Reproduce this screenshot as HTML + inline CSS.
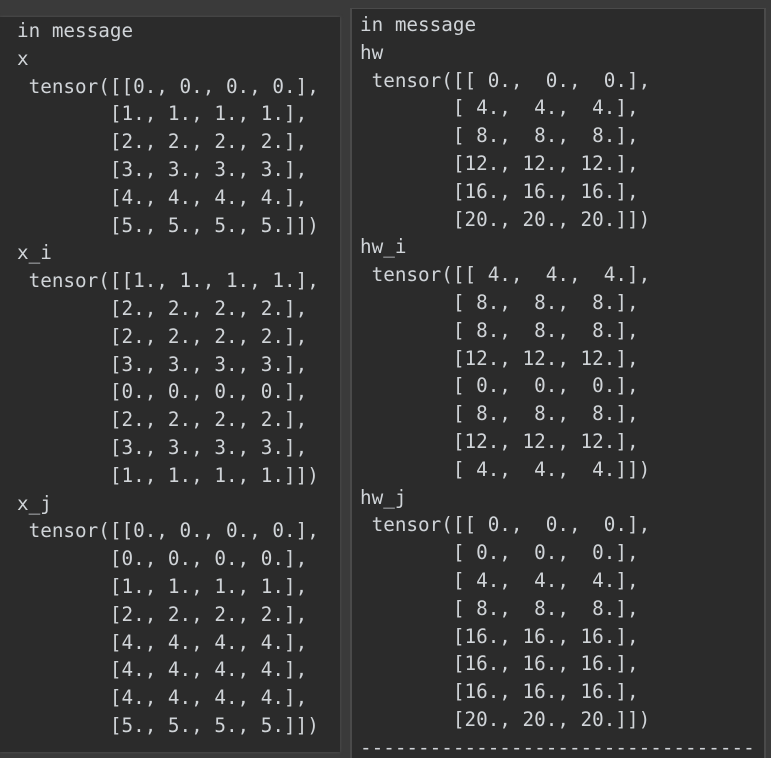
<!DOCTYPE html>
<html><head><style>
html,body{margin:0;padding:0;width:771px;height:758px;overflow:hidden;background:#3a3a3a;}
.p{position:absolute;background:#2b2b2b;font-family:"DejaVu Sans Mono","Liberation Mono",monospace;font-size:19.3px;line-height:27.8px;color:#d0d4d8;white-space:pre;overflow:hidden;box-sizing:border-box;}
#l{left:0;top:17px;width:340px;height:735px;box-shadow:0 0 3px #555;}
#r{left:350px;top:8px;width:416px;height:750px;border-left:2px solid #4a4a4a;border-right:2px solid #4a4a4a;border-top:1px solid #4a4a4a;}
.t{position:absolute;}
</style></head><body>
<div class="p" id="l"><div class="t" style="left:17px;top:0px">in message
x
 tensor([[0., 0., 0., 0.],
        [1., 1., 1., 1.],
        [2., 2., 2., 2.],
        [3., 3., 3., 3.],
        [4., 4., 4., 4.],
        [5., 5., 5., 5.]])
x_i
 tensor([[1., 1., 1., 1.],
        [2., 2., 2., 2.],
        [2., 2., 2., 2.],
        [3., 3., 3., 3.],
        [0., 0., 0., 0.],
        [2., 2., 2., 2.],
        [3., 3., 3., 3.],
        [1., 1., 1., 1.]])
x_j
 tensor([[0., 0., 0., 0.],
        [0., 0., 0., 0.],
        [1., 1., 1., 1.],
        [2., 2., 2., 2.],
        [4., 4., 4., 4.],
        [4., 4., 4., 4.],
        [4., 4., 4., 4.],
        [5., 5., 5., 5.]])</div></div>
<div class="p" id="r"><div class="t" style="left:8px;top:2px">in message
hw
 tensor([[ 0.,  0.,  0.],
        [ 4.,  4.,  4.],
        [ 8.,  8.,  8.],
        [12., 12., 12.],
        [16., 16., 16.],
        [20., 20., 20.]])
hw_i
 tensor([[ 4.,  4.,  4.],
        [ 8.,  8.,  8.],
        [ 8.,  8.,  8.],
        [12., 12., 12.],
        [ 0.,  0.,  0.],
        [ 8.,  8.,  8.],
        [12., 12., 12.],
        [ 4.,  4.,  4.]])
hw_j
 tensor([[ 0.,  0.,  0.],
        [ 0.,  0.,  0.],
        [ 4.,  4.,  4.],
        [ 8.,  8.,  8.],
        [16., 16., 16.],
        [16., 16., 16.],
        [16., 16., 16.],
        [20., 20., 20.]])
----------------------------------</div></div>
</body></html>
